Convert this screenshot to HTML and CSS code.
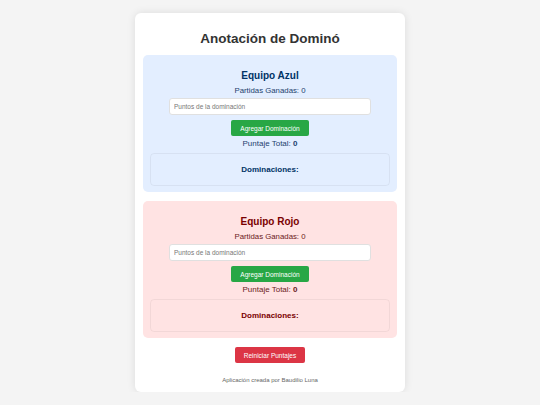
FILE: index.html
```html
<!DOCTYPE html>
<html lang="es">
<head>
<meta charset="utf-8">
<title>Anotación de Dominó</title>
<link rel="stylesheet" href="styles.css">
</head>
<body>
<div class="container">
  <h1 class="title">Anotación de Dominó</h1>
  <section class="team team-blue">
    <h2 class="team-name">Equipo Azul</h2>
    <p class="wins">Partidas Ganadas: 0</p>
    <input class="points" type="text" placeholder="Puntos de la dominación">
    <button class="btn btn-add">Agregar Dominación</button>
    <p class="total">Puntaje Total: <strong>0</strong></p>
    <div class="doms"><h3 class="doms-title">Dominaciones:</h3></div>
  </section>
  <section class="team team-red">
    <h2 class="team-name">Equipo Rojo</h2>
    <p class="wins">Partidas Ganadas: 0</p>
    <input class="points" type="text" placeholder="Puntos de la dominación">
    <button class="btn btn-add">Agregar Dominación</button>
    <p class="total">Puntaje Total: <strong>0</strong></p>
    <div class="doms"><h3 class="doms-title">Dominaciones:</h3></div>
  </section>
  <button class="btn btn-reset">Reiniciar Puntajes</button>
  <p class="footer">Aplicación creada por Baudilio Luna</p>
</div>
</body>
</html>
```

FILE: styles.css
```css
* { box-sizing: border-box; }
html, body { margin: 0; padding: 0; }
body {
  background: #f4f4f4;
  font-family: "Liberation Sans", Arial, sans-serif;
  color: #333;
  padding-top: 13px;
}
.container {
  width: 270px;
  margin: 0 auto;
  background: #fff;
  border-radius: 6px;
  box-shadow: 0 0 8px rgba(0,0,0,0.1);
  padding: 8px 8px 8px;
  display: flex;
  flex-direction: column;
  align-items: center;
}
.title {
  margin: 9px 0 7px;
  font-size: 13.5px;
  line-height: 18px;
  color: #333;
}
.team {
  width: 100%;
  border-radius: 5px;
  padding: 14px 7px 6px;
  display: flex;
  flex-direction: column;
  align-items: center;
  margin-bottom: 9px;
}
.team-blue { background: #e3eeff; color: #1d3f6e; }
.team-blue .team-name, .team-blue .doms-title { color: #003366; }
.team-red { background: #ffe3e3; color: #6b1a1a; }
.team-red .team-name, .team-red .doms-title { color: #7a0000; }
.team-name {
  margin: 0 0 3px;
  font-size: 10px;
  line-height: 14px;
}
.wins {
  margin: 0;
  font-size: 7.8px;
  line-height: 10px;
}
.points {
  width: 202px;
  height: 17px;
  border: 1px solid #e0e0e0;
  border-radius: 3px;
  padding: 0 4px;
  font-family: "Liberation Sans", Arial, sans-serif;
  font-size: 6.5px;
  background: #fff;
  margin: 2px 0 5px;
}
.points::placeholder { color: #777; }
.btn {
  border: none;
  border-radius: 2px;
  color: #fff;
  font-family: "Liberation Sans", Arial, sans-serif;
  font-size: 6.5px;
  height: 16px;
  padding: 0 8px;
}
.btn-add { background: #28a745; width: 78px; }
.total {
  margin: 3px 0 4px;
  font-size: 8px;
  line-height: 10px;
}
.doms {
  width: 100%;
  height: 33px;
  border: 1px solid rgba(0,0,0,0.05);
  border-radius: 4px;
  display: flex;
  align-items: center;
  justify-content: center;
}
.doms-title {
  margin: 0;
  font-size: 8px;
  line-height: 10px;
}
.btn-reset { background: #dc3545; width: 70px; }
.footer {
  margin: 13px 0 0;
  font-size: 6px;
  line-height: 8px;
  color: #666;
}
```
